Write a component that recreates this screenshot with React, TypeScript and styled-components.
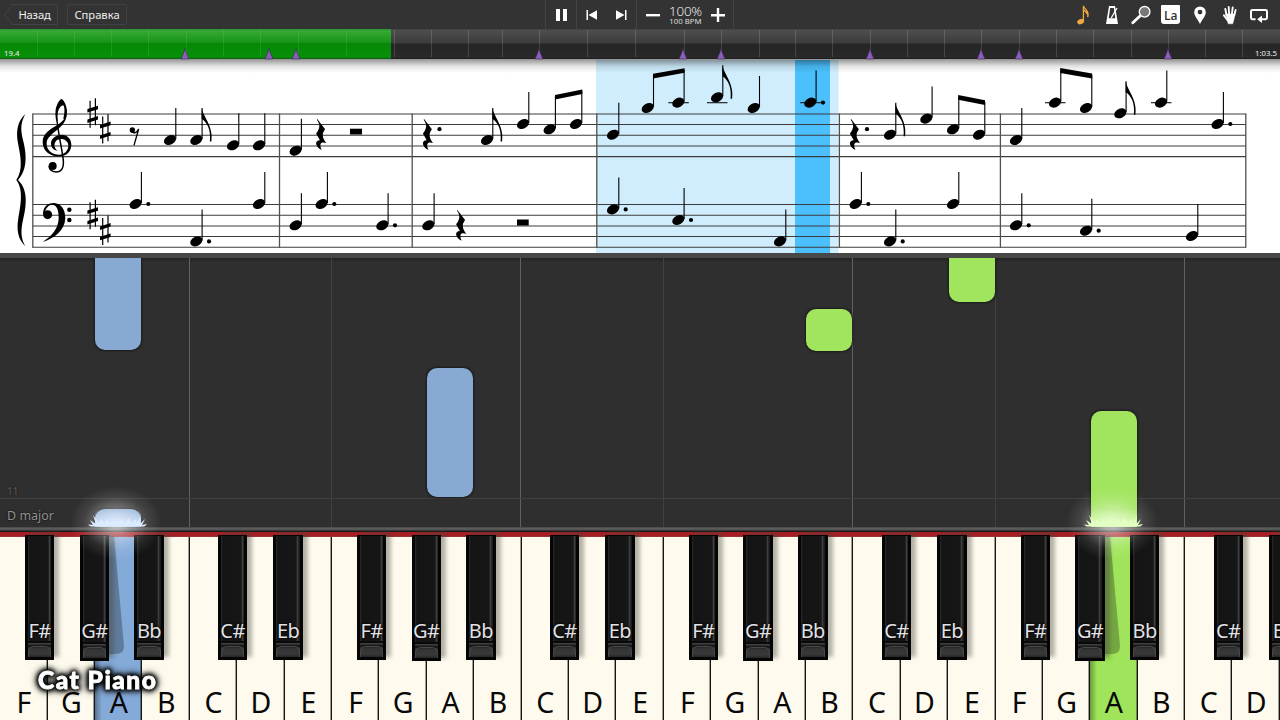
import React from "react";
import styled, { createGlobalStyle } from "styled-components";

const Global = createGlobalStyle`
  * { box-sizing: border-box; }
  body { margin: 0; background: #2f2f2f; overflow: hidden; }
`;

const Window = styled.div`
  width: 1280px;
  height: 720px;
  display: flex;
  flex-direction: column;
  overflow: hidden;
  font-family: "Noto Sans", sans-serif;
  color: #fff;
`;

/* ---------- toolbar ---------- */

const Toolbar = styled.header`
  display: grid;
  grid-template-columns: 545px 189px 1fr;
  height: 29px;
  flex: none;
  background: #333;
`;

const MenuGroup = styled.nav`
  display: flex;
  align-items: center;
  gap: 9px;
  padding-left: 4px;
`;

const BackButton = styled.button`
  position: relative;
  width: 54px;
  height: 21px;
  padding: 0 0 0 7px;
  border: 0;
  background: none;
  color: #eee;
  font: 11.2px/20px "Noto Sans", sans-serif;
  letter-spacing: -0.2px;
  svg { position: absolute; inset: 0; }
`;

const MenuButton = styled.button`
  width: 60px;
  height: 21px;
  padding: 0;
  border: 1px solid #414141;
  border-radius: 2px;
  background: none;
  color: #eee;
  font: 11.2px/18px "Noto Sans", sans-serif;
  letter-spacing: 0;
`;

const Transport = styled.div`
  display: grid;
  grid-template-columns: 31px 60px 97px;
  border-left: 1px solid #444;
`;

const TransportCell = styled.div`
  display: flex;
  align-items: center;
  justify-content: space-around;
  border-right: 1px solid #444;
  &:first-child { padding-left: 2px; }
`;

const TempoCell = styled(TransportCell)`
  justify-content: space-between;
  padding: 0 8px 0 9px;
`;

const Tempo = styled.div`
  display: flex;
  flex-direction: column;
  align-items: center;
  width: 36px;
  padding-top: 1px;
  strong { font: 300 13.4px/12px "Open Sans", sans-serif; letter-spacing: -0.2px; }
  span { font-size: 7.8px; line-height: 8px; white-space: nowrap; color: #ddd; }
`;

const Tools = styled.div`
  display: flex;
  justify-content: flex-end;
  padding-right: 6.3px;
`;

const Tool = styled.div`
  width: 29.4px;
  height: 29px;
  display: flex;
  align-items: center;
  justify-content: center;
  svg { width: 20px; height: 20px; display: block; }
`;

const NameBadge = styled.div`
  width: 19px;
  height: 19px;
  border-radius: 1px 1px 3px 3px;
  background: #fff;
  color: #333;
  font: 600 12px/21px "Open Sans", sans-serif;
  text-align: center;
`;

/* ---------- timeline ---------- */

const Timeline = styled.div`
  position: relative;
  height: 31px;
  flex: none;
  background: linear-gradient(#434343 0, #4d4d4d 2px, #3b3b3b 14px, #252525 15px, #292929 29px, #111 30px, #999 30px);
  font-size: 7.8px;
`;

const Played = styled.div`
  width: 391px;
  height: 30px;
  background: linear-gradient(#2a922a 0, #35aa35 2px, #199519 13px, #068806 15px, #079107 28px, #155515 30px);
`;

const Tick = styled.i<{ $x: number; $on: boolean }>`
  position: absolute;
  top: 1px;
  left: ${(p) => p.$x}px;
  width: 1px;
  height: 27px;
  background: ${(p) => (p.$on ? "rgba(150,220,150,.16)" : "rgba(255,255,255,.14)")};
`;

const Marker = styled.svg<{ $x: number }>`
  position: absolute;
  left: ${(p) => p.$x - 5}px;
  top: 19px;
`;

const Clock = styled.span<{ $end?: boolean }>`
  position: absolute;
  top: 18px;
  ${(p) => (p.$end ? "right: 3px;" : "left: 4px;")}
  line-height: 12px;
  color: #eee;
`;

/* ---------- score ---------- */

const ScorePane = styled.section`
  height: 198px;
  flex: none;
  background: #fff;
  border-bottom: 5px solid #484848;
  svg { display: block; }
`;

/* ---------- falling notes ---------- */

const Roll = styled.section`
  position: relative;
  height: 269px;
  flex: none;
  overflow: hidden;
  background: linear-gradient(#222 0, #2f2f2f 4px);
`;

const Guide = styled.i<{ $x: number; $strong: boolean }>`
  position: absolute;
  top: 0;
  bottom: 0;
  left: ${(p) => p.$x}px;
  width: 1px;
  background: ${(p) => (p.$strong ? "#606060" : "#414141")};
`;

const MeasureLine = styled.i`
  position: absolute;
  left: 0;
  right: 0;
  top: 240px;
  height: 1px;
  background: #404040;
`;

const Block = styled.div<{ $x: number; $y: number; $h: number; $hand: "left" | "right" }>`
  position: absolute;
  left: ${(p) => p.$x}px;
  top: ${(p) => p.$y}px;
  width: 46px;
  height: ${(p) => p.$h}px;
  border-radius: 10px;
  background: ${(p) => (p.$hand === "left" ? "#87a9d2" : "#a1e45d")};
  box-shadow: 0 0 2px 1px #1b1b1b;
`;

const RollText = styled.span<{ $y: number; $size: number; $color: string }>`
  position: absolute;
  left: 7px;
  top: ${(p) => p.$y}px;
  font-size: ${(p) => p.$size}px;
  line-height: 16px;
  color: ${(p) => p.$color};
  text-shadow: 0 0 2px #000;
`;

/* ---------- keyboard ---------- */

const Keyboard = styled.section`
  position: relative;
  height: 193px;
  flex: none;
`;

const Rail = styled.div`
  height: 10px;
  background: linear-gradient(#3c3c3c 0, #5e5e5e 1px, #555 3px, #191919 4px, #191919 5px, #a51f24 5px, #a51f24 9px, #8d4a45 10px);
`;

const WhiteKeys = styled.div`
  display: flex;
  height: 183px;
  margin-left: 0.3px;
  background: #fefbee;
`;

const WhiteKey = styled.div<{ $color?: string }>`
  width: 47.4px;
  flex: none;
  display: flex;
  align-items: flex-end;
  justify-content: center;
  padding-bottom: 2px;
  box-shadow: inset -1.4px 0 0 #151515;
  background: ${(p) =>
    p.$color ? `linear-gradient(90deg, rgba(0,0,0,.32), transparent 7px), ${p.$color}` : "#fefbee"};
  color: #080808;
  font-size: 28.5px;
  line-height: 32px;
`;

const BlackKey = styled.div<{ $x: number; $soft: boolean }>`
  position: absolute;
  left: ${(p) => p.$x}px;
  top: 8px;
  width: 29.5px;
  height: ${(p) => (p.$soft ? 126 : 125)}px;
  border: solid #050505;
  border-width: 1px 3px 3px;
  background: linear-gradient(90deg, #2b2b2b 0, #141414 2px, #161616 20px, #3e3e3e 21.5px, #1c1c1c 23px);
  box-shadow: 5px -3px 4px rgba(70, 70, 60, .4);
`;

const KeyFoot = styled.div`
  position: absolute;
  left: 0;
  right: 0;
  bottom: 0;
  height: 16px;
  border-top: 2px solid #0a0a0a;
  background: linear-gradient(#484848 0, #111 3px, #333 5px, #393939 11px, #252525 100%);
  &::after {
    content: "";
    position: absolute;
    left: 0;
    right: 0;
    top: 3px;
    height: 10px;
    border: 1px solid #484848;
    border-width: 1px 1px 0;
    border-radius: 6px 6px 0 0;
  }
`;

const BlackLabel = styled.span`
  position: absolute;
  left: -8px;
  right: -8px;
  top: 82px;
  text-align: center;
  font-size: 20px;
  line-height: 26px;
  letter-spacing: -0.6px;
  color: #e2e2e6;
  text-shadow: 0 0 2px #000, 0 0 2px #000;
`;

const Cast = styled.svg<{ $x: number }>`
  position: absolute;
  left: ${(p) => p.$x}px;
  top: 9px;
`;

const Spark = styled.svg<{ $x: number }>`
  position: absolute;
  left: ${(p) => p.$x - 60}px;
  top: 465px;
  pointer-events: none;
`;

const Title = styled.div`
  position: absolute;
  left: 38px;
  top: 666px;
  font: 900 24.5px/28px Lato, sans-serif;
  letter-spacing: 1.5px;
  white-space: nowrap;
  -webkit-text-stroke: 0.8px #fff;
  filter: drop-shadow(0 0 2px #000) drop-shadow(0 0 2px #000) drop-shadow(0 0 3px #000);
`;

/* ---------- score data ---------- */

type Note = { x: number; y: number; flag?: boolean; dot?: boolean; ledger?: boolean; top?: number };

const notes: Note[] = [
  { x: 170, y: 140 }, { x: 196.3, y: 140, flag: true }, { x: 233, y: 145.3 }, { x: 259, y: 145.3 },
  { x: 135.6, y: 204, dot: true }, { x: 196.3, y: 241.4, dot: true }, { x: 259, y: 204 },
  { x: 295.6, y: 150.7 }, { x: 295.6, y: 225.3 }, { x: 321.6, y: 204, dot: true }, { x: 382.3, y: 225.3, dot: true },
  { x: 487, y: 140, flag: true }, { x: 523, y: 124 }, { x: 549.6, y: 129.3, top: 96 }, { x: 576, y: 124, top: 91 },
  { x: 428.3, y: 225.3 },
  { x: 613, y: 134.7 }, { x: 647.7, y: 108, top: 75 }, { x: 678.3, y: 102.6, top: 70, ledger: true },
  { x: 717, y: 97.3, flag: true, ledger: true }, { x: 753.7, y: 108 }, { x: 810.3, y: 102.6, dot: true, ledger: true },
  { x: 613, y: 209.4, dot: true }, { x: 678.3, y: 220, dot: true }, { x: 780, y: 241.4 },
  { x: 890, y: 134.7, flag: true }, { x: 926.3, y: 118.6 }, { x: 953, y: 129.3, top: 97 }, { x: 979, y: 134.7, top: 102 },
  { x: 855.6, y: 204, dot: true }, { x: 890, y: 241.4, dot: true }, { x: 953, y: 204 },
  { x: 1016, y: 140 }, { x: 1055, y: 102.6, top: 70, ledger: true }, { x: 1086, y: 108, top: 75 },
  { x: 1120.3, y: 113.3, flag: true }, { x: 1161, y: 102.6, ledger: true }, { x: 1217.6, y: 124, dot: true },
  { x: 1016, y: 225.3, dot: true }, { x: 1086, y: 230.7, dot: true }, { x: 1192, y: 236 },
];

const staffLines = [113.9, 124.4, 135.2, 146, 156.6, 204.4, 215.2, 226, 236.5, 247.2];
const barLines = [32.8, 279.5, 412.2, 596.8, 839.4, 1000.4, 1245.8];
const beams = ["555,95 582.3,89.5 582.3,94 555,99.5", "653,73.8 684.6,68.2 684.6,72.8 653,78.6", "958.2,95 985,100.3 985,105 958.2,99.8", "1060.2,68 1092.2,73.6 1092.2,78.5 1060.2,73"];

const NoteGlyph = ({ x, y, flag, dot, ledger, top }: Note) => {
  const sx = x + 5.8;
  const t = top ?? y - 32;
  return (
    <g>
      {ledger && <path d={`M${x - 10} 102.7H${x + 10.5}`} stroke="#111" strokeWidth="1.1" />}
      <ellipse cx={x} cy={y} rx="6.4" ry="4.6" transform={`rotate(-27 ${x} ${y})`} />
      <path d={`M${sx} ${y - 1}V${t}`} stroke="#000" strokeWidth="1.1" />
      {flag && <path d={`M${sx - 0.4} ${t} C${sx + 1.6} ${t + 10} ${sx + 11.5} ${t + 18} ${sx + 9.3} ${t + 33.5} L${sx + 7.8} ${t + 33.5} C${sx + 9} ${t + 22} ${sx + 5} ${t + 14} ${sx - 0.4} ${t + 11}Z`} />}
      {dot && <circle cx={x + 12.7} cy={y} r="2.1" />}
    </g>
  );
};

const QuarterRest = ({ x, y }: { x: number; y: number }) => (
  <path
    transform={`translate(${x} ${y})`}
    d="M-3.2 -15.6 L4.6 -5.5 C1.2 -1 1.5 2.2 5.7 8.4 C.8 6.5 -1.8 8.7 1.2 15.2 C-5.4 12.2 -6.3 5.7 -.6 5.5 L-4.4 -1.2 C-.2 -6.5 -.2 -10.2 -3.6 -15Z"
  />
);

const Sharp = ({ x, y }: { x: number; y: number }) => (
  <g transform={`translate(${x} ${y})`}>
    <path d="M-2.6 -12.6V14.4M2.7 -15V12" stroke="#000" strokeWidth="1.2" />
    <path d="M-5.3 -4.2 5.3 -7.6V-4 L-5.3 -.7ZM-5.3 6.2 5.3 2.8V6.3L-5.3 9.7Z" />
  </g>
);

const Score = () => (
  <svg width="1280" height="193" viewBox="0 60 1280 193">
    <defs>
      <linearGradient id="topShade" x1="0" y1="0" x2="0" y2="1">
        <stop offset="0" stopColor="#000" stopOpacity=".38" />
        <stop offset=".5" stopColor="#000" stopOpacity=".1" />
        <stop offset="1" stopColor="#000" stopOpacity="0" />
      </linearGradient>
    </defs>
    <rect x="596" y="60" width="242.5" height="193" fill="#d0edfd" />
    <rect x="795" y="60" width="35" height="193" fill="#4bc0fd" />
    <rect x="0" y="60" width="1280" height="13" fill="url(#topShade)" />
    {staffLines.map((y) => <path key={y} d={`M32.5 ${y}H1246`} stroke="#3c3c3c" strokeWidth="1.05" />)}
    {barLines.map((x) => <path key={x} d={`M${x} 113.5V247.7`} stroke="#505050" strokeWidth="1.3" />)}
    <g transform="translate(0 60) scale(.33333)">
      <path d="M76 162 C51 185 48 215 54 250 C62 290 70 330 49 360 C72 390 61 440 55 475 C49 510 54 538 76 559 C62 535 62 512 69 480 C79 440 86 390 54 360 C86 325 78 275 69 240 C61 205 62 190 76 162Z" />
      <path d="M198 165 C192 198 129 203 128 245 C128 275 153 290 178 289 C202 288 214 272 214 254 C214 235 200 224 186 224 C165 224 152 238 153 252 C154 264 162 270 173 273 C163 263 162 256 165 248 C169 239 176 237 185 237 C198 238 206 248 205 258 C204 274 192 283 178 284 C157 284 138 270 140 248 C143 218 202 205 200 160Z" />
      <path d="M175 208 C169 188 164 168 167 148 C170 134 177 120 184 117 C193 120 200 138 201 152 C201 164 199 170 194 180 L190 176 C194 160 195 144 190 136 C178 138 171 155 173 175Z" />
      <path d="M173 195 C177 232 187 272 190 302 C192 326 182 337 168 336 C156 335 148 328 147 318" fill="none" stroke="#000" strokeWidth="4.5" />
      <circle cx="158" cy="318" r="12" />
      <circle cx="143" cy="464" r="13.5" />
      <path d="M129 462 C129 438 146 429 162 429 C184 430 196 449 196 475 C194 512 162 536 128 546 C156 528 175 507 176 475 C176 450 171 436 158 434 C146 434 136 444 134 462Z" />
      <circle cx="208" cy="449" r="6.7" />
      <circle cx="208" cy="480" r="6.7" />
      <circle cx="397" cy="210" r="8" />
      <path d="M392 214 C402 222 411 218 416 207 L402 256" fill="none" stroke="#000" strokeWidth="4" />
    </g>
    <Sharp x={92.7} y={113.3} /><Sharp x={105.3} y={129.2} />
    <Sharp x={92.7} y={214.8} /><Sharp x={105.3} y={230.6} />
    <QuarterRest x={320.5} y={134.7} /><QuarterRest x={427.3} y={134.7} />
    <QuarterRest x={460.5} y={225.5} /><QuarterRest x={854.3} y={134.7} />
    <circle cx="439.5" cy="129.2" r="2.1" /><circle cx="867" cy="129.2" r="2.1" />
    <rect x="350" y="128.7" width="12" height="5.8" /><rect x="517" y="219.5" width="11.7" height="6" />
    {beams.map((b) => <polygon key={b} points={b} />)}
    {notes.map((n) => <NoteGlyph key={`${n.x}-${n.y}`} {...n} />)}
  </svg>
);

/* ---------- other data ---------- */

const ticks = [37, 74, 111, 148, 186, 223, 260, 298, 346, 394, 431, 468, 502, 539, 587, 635, 684, 721, 759, 795, 832, 870, 907, 944, 981, 1019, 1056, 1093, 1131, 1168, 1205, 1242];
const markers = [185.3, 268.7, 295.7, 538.6, 682.6, 721.4, 869.6, 981, 1019.3, 1168];

const octave = 331.9;
const blackKeys = [0, 1, 2, 3].flatMap((o) =>
  ([["F#", 24.8], ["G#", 79.6], ["Bb", 134.2], ["C#", 217.8], ["Eb", 273.3]] as [string, number][]).map(([name, x]) => ({ name, x: x + o * octave }))
).filter((k) => k.x < 1280);

const whiteKeys = Array.from({ length: 27 }, (_, i) => "FGABCDE"[i % 7]);
const pressed: Record<number, string> = { 2: "#84aad8", 23: "#9fe45a" };

const Glow = ({ x, tint, id }: { x: number; tint: string; id: string }) => (
  <Spark $x={x} width="120" height="125" viewBox="0 0 120 125">
    <defs>
      <radialGradient id={id}>
        <stop offset="0" stopColor="#fff" stopOpacity=".7" />
        <stop offset=".35" stopColor="#fff" stopOpacity=".36" />
        <stop offset=".7" stopColor="#fff" stopOpacity=".1" />
        <stop offset="1" stopColor="#fff" stopOpacity="0" />
      </radialGradient>
      <linearGradient id={`${id}b`} x1="0" y1="0" x2="0" y2="1">
        <stop offset="0" stopColor={tint} stopOpacity="0" />
        <stop offset="1" stopColor={tint} stopOpacity=".9" />
      </linearGradient>
      <clipPath id={`${id}c`}><rect width="120" height="61.5" /></clipPath>
    </defs>
    <ellipse cx="58" cy="58" rx="46" ry="37" fill={`url(#${id})`} />
    <rect x="37" y="44" width="46" height="17.5" rx="6" fill={`url(#${id}b)`} />
    <path clipPath={`url(#${id}c)`} fill={tint} d="M33 62 30 59.5 35 60 32 55 38 59 35 50 41 58 43 54 46 58 49 54 52 58 56 55 60 58 64 54 67 58 71 53 74 58 77 54 79 58 83 51 82 59 87 54 84 60 89 59 86 62Z" />
  </Spark>
);

export default function App() {
  return (
    <>
      <Global />
      <Window>
        <Toolbar>
          <MenuGroup>
            <BackButton>
              <svg width="54" height="21" fill="none" stroke="#434343"><path d="M8.5.5H53.5V20.5H8.5L.7 10.5Z" /></svg>
              Назад
            </BackButton>
            <MenuButton>Справка</MenuButton>
          </MenuGroup>
          <Transport>
            <TransportCell>
              <svg width="12" height="14" fill="#fff"><path d="M0 1H4V13H0ZM7 1H11V13H7Z" /></svg>
            </TransportCell>
            <TransportCell>
              <svg width="12" height="12" fill="#fff"><path d="M.5 1H2V11H.5ZM11 1.3V10.7L2.5 6Z" /></svg>
              <svg width="12" height="12" fill="#fff"><path d="M10 1H11.5V11H10ZM1 1.3V10.7L9.5 6Z" /></svg>
            </TransportCell>
            <TempoCell>
              <svg width="14" height="14" fill="#fff"><path d="M0 6H14V8.4H0Z" /></svg>
              <Tempo><strong>100%</strong><span>100 BPM</span></Tempo>
              <svg width="14" height="14" fill="#fff"><path d="M0 6H5.8V0H8.2V6H14V8.4H8.2V14H5.8V8.4H0Z" /></svg>
            </TempoCell>
          </Transport>
          <Tools>
            <Tool><svg viewBox="0 0 20 20"><ellipse cx="7.6" cy="16.6" rx="3.5" ry="2.6" transform="rotate(-20 7.6 16.6)" fill="#f0a840" /><path d="M10.4 16V.8C11 4 16.4 5.4 14.8 11.5M10.6 4.5C12 7.5 16 8 14.6 12" fill="none" stroke="#f0a840" strokeWidth="1.3" /></svg></Tool>
            <Tool><svg viewBox="0 0 20 20"><path d="M7 1H13L16 19H4ZM8.2 3 6.7 13.2H13.3L11.8 3Z" fill="#fff" fillRule="evenodd" /><path d="M9.2 13 15 3" stroke="#fff" strokeWidth="1.3" /></svg></Tool>
            <Tool><svg viewBox="0 0 20 20"><path d="M1.8 17.8 9 11" stroke="#fff" strokeWidth="2.8" strokeLinecap="round" /><circle cx="13.6" cy="6.8" r="5.3" fill="#777" stroke="#fff" strokeWidth="1.4" /></svg></Tool>
            <Tool><NameBadge>La</NameBadge></Tool>
            <Tool><svg viewBox="0 0 20 20"><path fillRule="evenodd" fill="#fff" d="M10 19C8 14.5 4.2 11 4.2 7.2A5.8 5.8 0 0 1 15.8 7.2C15.8 11 12 14.5 10 19ZM10 4.7A2.4 2.4 0 1 0 10 9.5A2.4 2.4 0 1 0 10 4.7Z" /></svg></Tool>
            <Tool><svg viewBox="0 0 20 20" fill="none" stroke="#fff" strokeLinecap="round"><path d="M6.5 10 5.3 4M9.1 9 8.7 2M11.9 9 12.7 2.4M14.2 10.5 15.6 5M7.5 15 3.9 10.3" strokeWidth="1.9" /><path d="M6 9H15L14 14 12.7 18.8H8.3L6.7 14Z" fill="#fff" strokeWidth=".5" /></svg></Tool>
            <Tool><svg viewBox="0 0 20 20"><path d="M6.5 14.2H3.4Q2 14.2 2 12.8V6.4Q2 5 3.4 5H16.6Q18 5 18 6.4V12.8Q18 14.2 16.6 14.2H12" fill="none" stroke="#fff" strokeWidth="2" /><path d="M13 10.4V18L8.2 14.2Z" fill="#fff" /></svg></Tool>
          </Tools>
        </Toolbar>

        <Timeline>
          <Played />
          {ticks.map((x) => <Tick key={x} $x={x} $on={x < 391} />)}
          {markers.map((x) => (
            <Marker key={x} $x={x} width="10" height="12"><path d="M5 .5 Q6 5 9 11H1Q4 5 5 .5Z" fill="#8a5fba" stroke="#3b2953" strokeWidth=".6" /></Marker>
          ))}
          <Clock>19.4</Clock>
          <Clock $end>1:03.5</Clock>
        </Timeline>

        <ScorePane><Score /></ScorePane>

        <Roll>
          {[189, 331, 520, 663, 852, 995, 1184].map((x, i) => <Guide key={x} $x={x} $strong={i % 2 === 0} />)}
          <MeasureLine />
          <Block $x={95} $y={-40} $h={132} $hand="left" />
          <Block $x={427} $y={109.5} $h={129} $hand="left" />
          <Block $x={95} $y={250.5} $h={40} $hand="left" />
          <Block $x={948.6} $y={-40} $h={84} $hand="right" />
          <Block $x={806.2} $y={51} $h={41.5} $hand="right" />
          <Block $x={1090.6} $y={153} $h={140} $hand="right" />
          <RollText $y={225} $size={10} $color="#646464">11</RollText>
          <RollText $y={250} $size={12.5} $color="#929292">D major</RollText>
        </Roll>

        <Keyboard>
          <Rail />
          <WhiteKeys>
            {whiteKeys.map((k, i) => <WhiteKey key={i} $color={pressed[i]}>{k}</WhiteKey>)}
          </WhiteKeys>
          {[108, 1104].map((x) => (
            <Cast key={x} $x={x} width="20" height="122"><path d="M0 0H6L16 110Q16 118 8 118H0Z" fill="#000" opacity=".27" /></Cast>
          ))}
          {blackKeys.map((k) => (
            <BlackKey key={k.x} $x={k.x} $soft={k.name === "G#"}>
              <KeyFoot />
              <BlackLabel>{k.name}</BlackLabel>
            </BlackKey>
          ))}
        </Keyboard>
        <Glow x={118} tint="#dcebff" id="glowLeft" />
        <Glow x={1114} tint="#e4ffc4" id="glowRight" />
        <Title>Cat Piano</Title>
      </Window>
    </>
  );
}
